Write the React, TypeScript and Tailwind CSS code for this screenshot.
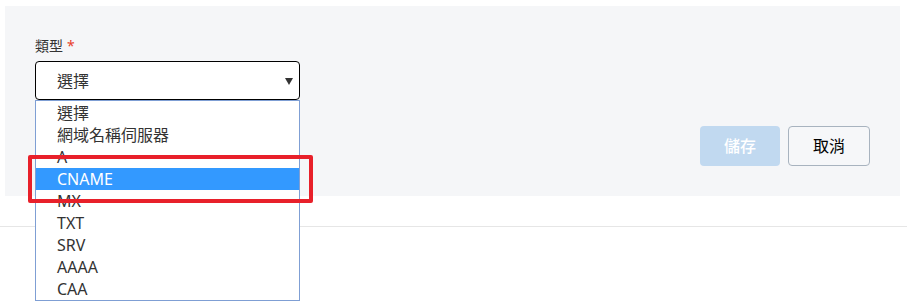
import React from "react";

const items = ["選擇", "網域名稱伺服器", "A", "CNAME", "MX", "TXT", "SRV", "AAAA", "CAA"];
const font = { fontFamily: '"Noto Sans", "Noto Sans CJK TC", sans-serif' };

export default function App() {
  return (
    <div className="relative w-[907px] h-[303px] bg-white overflow-hidden text-[#333]" style={font}>
      <div className="pt-[6px] pl-[5px]">
        <div className="w-[895px] h-[190px] bg-[#f5f6f8] px-[30px] pt-[30px] flex flex-col">
          <div className="h-[20px] text-[14px] leading-[20px] text-[#333] flex items-center gap-[4px]">
            <span>類型</span>
            <span className="text-[#e8402a]">*</span>
          </div>
          <div className="mt-[5px] w-[265px] h-[39px] shrink-0 bg-white border border-black rounded-[4px] flex items-center justify-between pl-[21px] pr-[6px]">
            <span className="text-[16px] leading-[22px] text-[#333]">選擇</span>
            <svg width="8" height="7" viewBox="0 0 8 7" className="mt-[1px]">
              <path d="M0 0 L8 0 L4 7 Z" fill="#333" />
            </svg>
          </div>
          <div className="mt-[26px] flex justify-end gap-[8px]">
            <button className="w-[80px] h-[40px] rounded-[4px] bg-[#c1d9f0] text-white text-[16px] font-medium">儲存</button>
            <button className="w-[82px] h-[40px] rounded-[4px] bg-[#f6f7f9] border border-[#a8b3bf] text-black text-[16px]">取消</button>
          </div>
        </div>
      </div>
      <div className="mt-[30px] h-px bg-[#e6e6e6]" />

      <div className="absolute left-[35px] top-[100px] w-[265px] h-[201px] bg-white border border-[#7f9fd4] py-[1px]">
        {items.map((it) => (
          <div
            key={it}
            className={
              "h-[22px] leading-[22px] pl-[21px] text-[16px] " +
              (it === "CNAME" ? "bg-[#3399ff] text-white" : "text-[#333]")
            }
          >
            {it}
          </div>
        ))}
      </div>

      <div className="absolute left-[28px] top-[155px] w-[285px] h-[48px] border-[4px] border-[#e8202a] rounded-[2px]" />
    </div>
  );
}
